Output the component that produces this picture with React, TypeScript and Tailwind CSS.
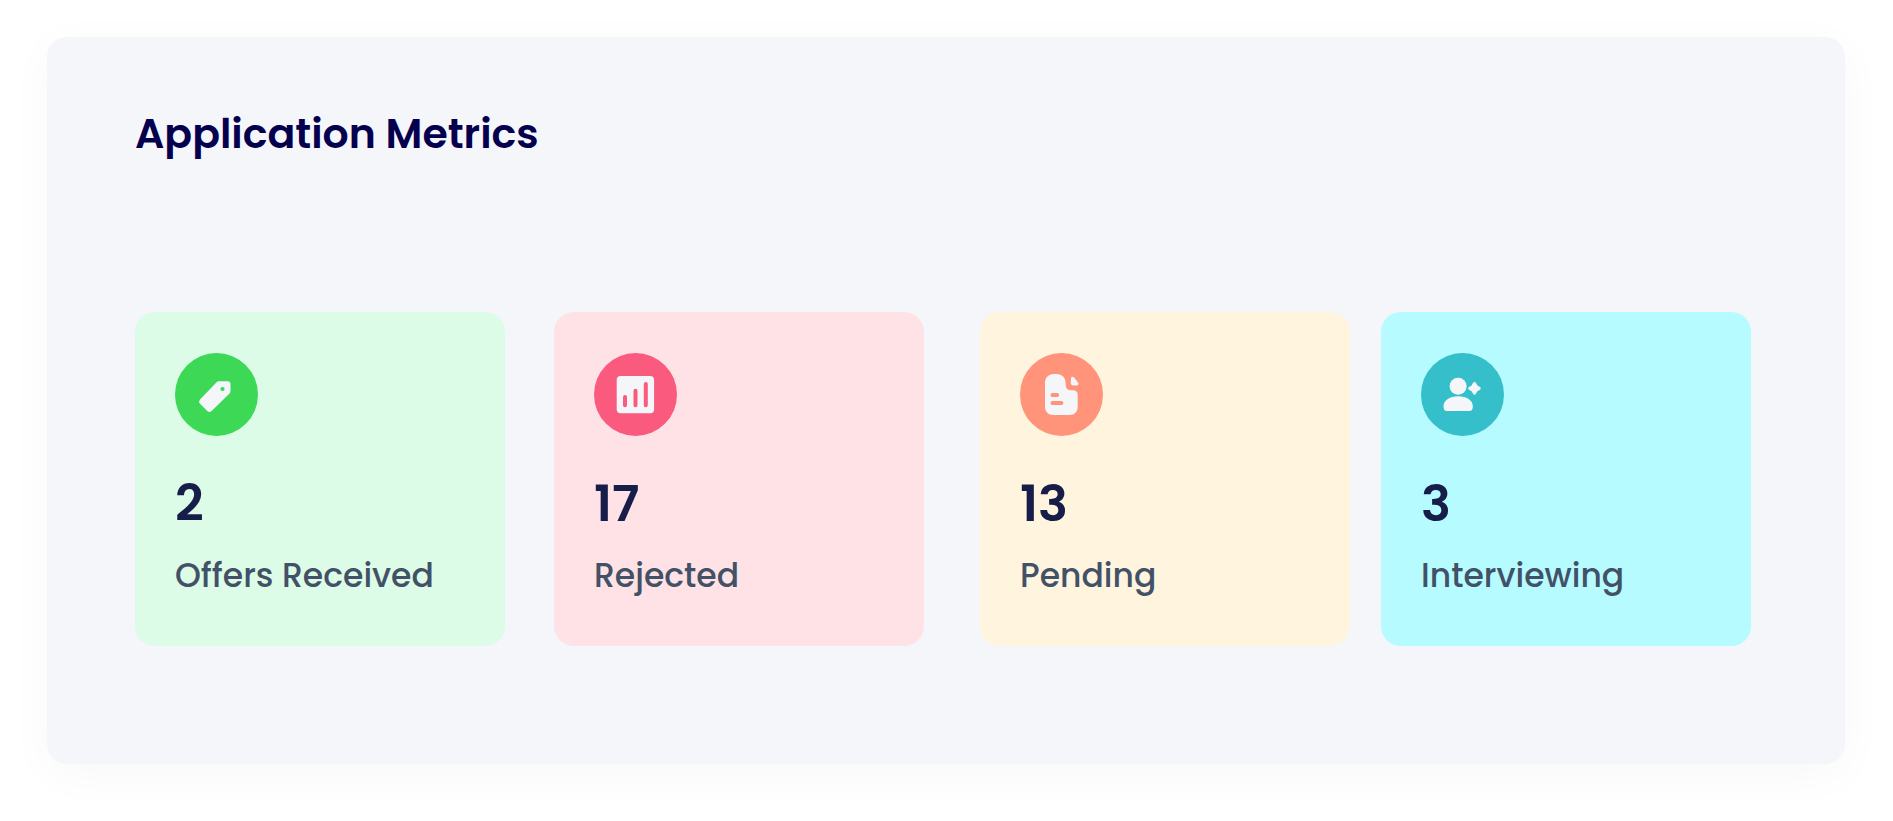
import type { ReactNode } from 'react'

interface Metric {
    label: string
    value: number
    card: string
    circle: string
    icon: ReactNode
}

const metrics: Metric[] = [
    {
        label: 'Offers Received',
        value: 2,
        card: 'bg-[#dcfce7]',
        circle: 'text-[#3cd856]',
        icon: (
            <>
                <path d="M44 28.2H52.5q3 0 3 3V38q0 1.6-1.2 2.8L36.6 58q-2.3 1.9-4.3 0L25 50.8q-1.8-2.1 0-4.2L41.3 29.6Q42.6 28.2 44 28.2Z" />
                <circle cx="47.5" cy="36" r="2.1" fill="currentColor" />
            </>
        ),
    },
    {
        label: 'Rejected',
        value: 17,
        card: 'bg-[#ffe2e5] ml-[49px]',
        circle: 'text-[#fa5a7d]',
        icon: (
            <>
                <rect x="22.7" y="23" width="37.4" height="37.2" rx="4" />
                <path d="M31 44v8.3M41.5 37.8v14.5M51.8 31v21.3" stroke="currentColor" strokeWidth="4" strokeLinecap="round" />
            </>
        ),
    },
    {
        label: 'Pending',
        value: 13,
        card: 'bg-[#fff4de] ml-[56px]',
        circle: 'text-[#ff947a]',
        icon: (
            <>
                <path d="M34 21H36.5C42 21 45.7 24.7 45.7 30.3V32C45.7 35.4 48 37.3 51.2 37.3H52.9C55.8 37.3 57.7 38.9 57.7 41.5V54C57.7 58.6 54.3 62 49.7 62H33C28.4 62 25 58.6 25 54V30C25 24.5 28.5 21 34 21Z" />
                <path d="M51 25.3c0-1.5 1.8-2 3-1l4 5.2c1 1.5.3 3-1.5 3h-2.8c-2.3 0-3.2-1.7-2.9-3.5Z" />
                <path d="M32.5 41.9H37.2M32.5 50H41.4" stroke="currentColor" strokeWidth="4" strokeLinecap="round" />
            </>
        ),
    },
    {
        label: 'Interviewing',
        value: 3,
        card: 'bg-[#b5fbff] ml-[31px]',
        circle: 'text-[#35bfca]',
        icon: (
            <>
                <circle cx="37.1" cy="33.3" r="8.5" />
                <path d="M22.5 53.2C22.5 47.2 29 43.3 37.2 43.3S51.8 47.2 51.8 53.2c0 3.3-1.2 4.8-3.3 4.8H25.8c-2.1 0-3.3-1.5-3.3-4.8Z" />
                <path
                    d="M53.5 30.6L55.2 33.6L58.2 35.3L55.2 37L53.5 40L51.8 37L48.8 35.3L51.8 33.6Z"
                    stroke="#f4f6fa"
                    strokeWidth="3.2"
                    strokeLinejoin="round"
                />
            </>
        ),
    },
]

const MetricCard = ({ label, value, card, circle, icon }: Metric) => {
    return (
        <div className={`flex-1 min-w-0 rounded-[20px] px-10 pt-[41px] pb-[46px] ${card}`}>
            <svg className={`w-[83px] h-[83px] ${circle}`} viewBox="0 0 83 83" fill="#f4f6fa" aria-hidden="true">
                <circle cx="41.5" cy="41.5" r="41.5" fill="currentColor" />
                {icon}
            </svg>
            <p className="mt-[38px] text-[50px] leading-[60px] font-semibold text-[#151d48]">{value}</p>
            <p className="mt-[18px] text-[33px] leading-[48px] font-medium text-[#425166] whitespace-nowrap">{label}</p>
        </div>
    )
}

const App = () => {
    return (
        <main className="bg-white pl-[47px] pr-12 pt-[37px] pb-[57px] font-[Poppins,Inter,sans-serif]">
            <section className="rounded-[20px] bg-[#f4f6fa] pl-[88px] pr-[94px] pt-[67px] pb-[118px] shadow-[0_10px_48px_rgba(0,0,0,0.03)]">
                <h2 className="text-[41px] leading-[60px] font-semibold text-[#05004e]">Application Metrics</h2>
                <div className="mt-[148px] flex">
                    {metrics.map((metric) => (
                        <MetricCard key={metric.label} {...metric} />
                    ))}
                </div>
            </section>
        </main>
    )
}

export default App
